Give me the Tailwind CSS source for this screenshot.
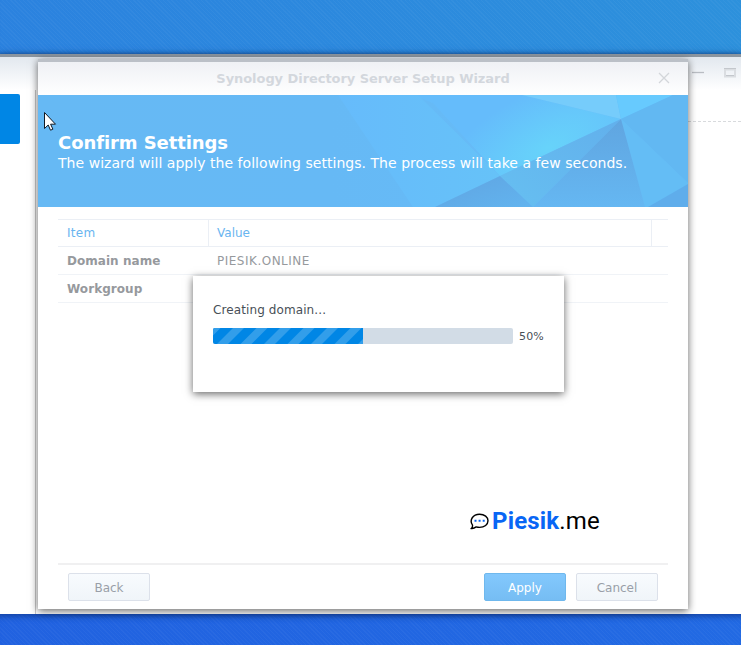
<!DOCTYPE html>
<html lang="en">
<head>
<meta charset="utf-8">
<title>Synology Directory Server Setup Wizard</title>
<script src="https://cdn.jsdelivr.net/npm/@tailwindcss/browser@4"></script>
</head>
<body class="relative h-[645px] w-[741px] overflow-hidden bg-[#2164e0] font-['Verdana','DejaVu_Sans',sans-serif] text-[12px] leading-4">
  <!-- desktop -->
  <div class="h-[54px] bg-[repeating-linear-gradient(45deg,#ffffff08_0px,#ffffff08_1px,transparent_1px,transparent_3px),linear-gradient(90deg,#2b82df,#2d91dc)] shadow-[inset_0_-4px_4px_-4px_#17569b]"></div>
  <main class="h-[560px] border-t-[3px] border-[#8b959f] bg-white shadow-[0_3px_9px_#0d2c70]">
    <div class="flex h-[33px] items-start justify-end bg-linear-to-b from-[#e2e8ef] to-white pt-[11px] pr-[5px]">
      <svg class="h-[11px] w-[44px]" viewBox="0 0 44 11" fill="none"><path d="M0 4.5h12" stroke="#b9bdc3" stroke-width="1.3"/><path d="M33 1.500h10v7H33z" stroke="#dadde1" stroke-width="2"/><path d="M32 0.5h12M34 7.5h8" stroke="#c3c7cc"/></svg>
    </div>
    <div class="flex items-start justify-between pt-1">
      <div class="h-[50px] w-5 rounded-r-[2px] bg-[#0086e5]"></div>
      <div class="mt-[27px] h-px w-[53px] bg-[repeating-linear-gradient(90deg,#d8dadd_0px,#d8dadd_3px,transparent_3px,transparent_5px)]"></div>
    </div>
  </main>
  <div class="h-[31px] bg-[repeating-linear-gradient(45deg,#ffffff08_0px,#ffffff08_1px,transparent_1px,transparent_3px),linear-gradient(90deg,#2162e0,#226ae3)] shadow-[inset_0_8px_6px_-6px_#123f9b]"></div>
  <div class="absolute top-[90px] left-[35px] h-[524px] w-px bg-[#c9c9c9]"></div>

  <!-- wizard -->
  <section class="absolute top-[59px] left-[38px] flex h-[550px] w-[650px] flex-col border-t-[3px] border-[#bbc0c7] bg-white shadow-[0_2px_8px_rgba(0,0,0,.6)]">
    <header class="relative flex h-[33px] shrink-0 items-center justify-center bg-linear-to-b from-[#eff1f5] to-white">
      <h1 class="text-[13px] font-bold tracking-[-0.06px] whitespace-nowrap text-[#d3d7dd]">Synology Directory Server Setup Wizard</h1>
      <svg class="absolute top-[10px] left-[620px] size-3" viewBox="0 0 12 12"><path d="M1 1l10 10M11 1L1 11" stroke="#d3d6da" stroke-width="1.3"/></svg>
    </header>
    <div class="relative h-[112px] shrink-0 bg-[#66b9f4] text-white">
      <svg class="absolute inset-0 h-[112px] w-[650px]" viewBox="0 0 650 112">
        <defs>
          <linearGradient id="a" x1="0" y1="0" x2="1" y2="0"><stop stop-color="#66b9f4"/><stop offset=".45" stop-color="#66b9f5"/><stop offset="1" stop-color="#66bdf9"/></linearGradient>
          <radialGradient id="b" gradientUnits="userSpaceOnUse" cx="0" cy="0" r="1" gradientTransform="translate(510 53) rotate(-26) scale(120 58)"><stop stop-color="#67d3fa"/><stop offset="1" stop-color="#65bcfb"/></radialGradient>
          <linearGradient id="c" x1="0" y1="1" x2="1" y2="0"><stop stop-color="#66bff1"/><stop offset="1" stop-color="#62b0ec"/></linearGradient>
          <linearGradient id="d" x1="0" y1="0" x2="0" y2="1"><stop stop-color="#60a5e0"/><stop offset="1" stop-color="#65b7f2"/></linearGradient>
          <linearGradient id="e" x1="0" y1="0" x2="1" y2="1"><stop stop-color="#60a4e1"/><stop offset="1" stop-color="#62b4ef"/></linearGradient>
          <linearGradient id="f" x1="0" y1="0" x2="1" y2="0"><stop stop-color="#66bbfb"/><stop offset="1" stop-color="#66c2f8"/></linearGradient>
        </defs>
        <path d="M0 0h650v112H0z" fill="url(#a)"/>
        <path d="M375 0H484L583 24 462 81 395 8z" fill="url(#b)"/>
        <path d="M300 0h80l82 81-65 31H375z" fill="url(#f)"/>
        <path d="M484 0h94l5 24z" fill="#76ccfb"/>
        <path d="M578 0h57L583 24z" fill="#67cafe"/>
        <path d="M635 0h15v88L583 24z" fill="#62b8f2"/>
        <path d="M583 24L650 88v1l-40 23h-3z" fill="#64bdf5"/>
        <path d="M650 89v23H610z" fill="#5fadeb"/>
        <path d="M583 24L462 81l33 31z" fill="url(#c)"/>
        <path d="M583 24l24 88H495z" fill="url(#d)"/>
        <path d="M462 81l33 31h-98z" fill="url(#e)"/>
      </svg>
      <div class="relative pt-[37px] pl-5">
        <h2 class="text-[18px] leading-[21px] font-bold tracking-[-0.08px] whitespace-nowrap">Confirm Settings</h2>
        <p class="text-[14px] leading-[21px] tracking-[0.04px] whitespace-nowrap">The wizard will apply the following settings. The process will take a few seconds.</p>
      </div>
    </div>
    <div class="mx-5 mt-3 flex-1 text-[#96999d]">
      <div class="flex h-7 border-y border-[#ebeff5] text-[#69b5f0]">
        <div class="flex w-[151px] items-center border-r border-[#ebeff5] pl-[9px] tracking-[0.3px]">Item</div>
        <div class="flex w-[443px] items-center border-r border-[#ebeff5] pl-2">Value</div>
      </div>
      <div class="flex h-7 items-center border-b border-[#f0f3f7]"><b class="w-[159px] pl-[9px] text-[12px] tracking-[0.04px]">Domain name</b><span class="tracking-[0.5px]">PIESIK.ONLINE</span></div>
      <div class="flex h-7 items-center border-b border-[#f0f3f7]"><b class="pl-[9px] text-[12px] tracking-[0.06px]">Workgroup</b></div>
      <div class="mt-[206px] ml-[412px] flex h-6 items-center whitespace-nowrap text-black">
        <svg class="mr-[3px] h-[17px] w-[19px] shrink-0" viewBox="0 0 19 17"><path d="M2.5 12.2C-1 7 3 1.2 9.5 1.2c5 0 8.5 3 8.5 6.6s-3.5 6.6-8.5 6.6c-1.2 0-2.300-.2-3.300-.5-1.300 1-3 1.800-4.800 1.600.8-.8 1.300-2 1.100-3.300z" fill="none" stroke="#000" stroke-width="1.400"/><path d="M4.500 6.800h2v2h-2zM8.600 6.800h2v2h-2zM12.700 6.800h2v2h-2z" fill="#0866f5"/></svg>
        <span class="font-[Roboto,sans-serif] text-[24px] leading-6 tracking-[0.17px]"><b class="text-[#0866f5]">Piesik</b>.me</span>
      </div>
    </div>
    <footer class="mx-5 flex h-[46px] shrink-0 items-start border-t-2 border-[#f0f0f1] px-[10px] pt-[8px] text-[#999fa8]">
      <button class="h-7 w-[82px] rounded-[2px] border border-[#dce1ea] bg-linear-to-b from-[#f8fbfe] to-[#f0f5f9] pt-px">Back</button>
      <button class="ml-auto h-7 w-[82px] rounded-[2px] border border-[#6fb8ed] bg-linear-to-b from-[#83c8fd] to-[#76bdf3] pt-px font-medium text-white">Apply</button>
      <button class="ml-[10px] h-7 w-[82px] rounded-[2px] border border-[#dce1ea] bg-linear-to-b from-[#f8fbfe] to-[#f0f5f9] pt-px">Cancel</button>
    </footer>
  </section>

  <!-- progress dialog -->
  <section class="absolute top-[276px] left-[193px] h-[116px] w-[371px] bg-white px-5 pt-[26px] text-[#484f57] shadow-[0_2px_8px_rgba(0,0,0,.6)]">
    <p class="tracking-[0.1px]">Creating domain...</p>
    <div class="mt-[10px] flex h-4 items-start">
      <div class="h-4 w-[300px] overflow-hidden rounded-[2px] bg-[#d2dce6]">
        <svg class="h-4 w-[150px]" viewBox="0 0 150 16"><path d="M0 0h150v16H0z" fill="#0086e5"/><path d="M-3.500 0h11l-16 16h-11zM20 0h11L15 16H4zM43.500 0h11l-16 16h-11zM67 0h11L62 16H51zM90.500 0h11l-16 16h-11zM114 0h11l-16 16H98zM137.500 0h11l-16 16h-11zM161 0h11l-16 16h-11z" fill="#329eea"/></svg>
      </div>
      <span class="ml-[6px] pt-px text-[11px] leading-4 tracking-[0.15px]">50%</span>
    </div>
  </section>
  <svg class="absolute top-[111px] left-[43px] h-[21px] w-[14px]" viewBox="0 0 14 21"><path d="M1.500 1.500v16l3.700-3.500 2.300 5.200 2.400-1-2.300-5h4.900z" fill="#fff" stroke="#111a25"/></svg>
</body>
</html>
